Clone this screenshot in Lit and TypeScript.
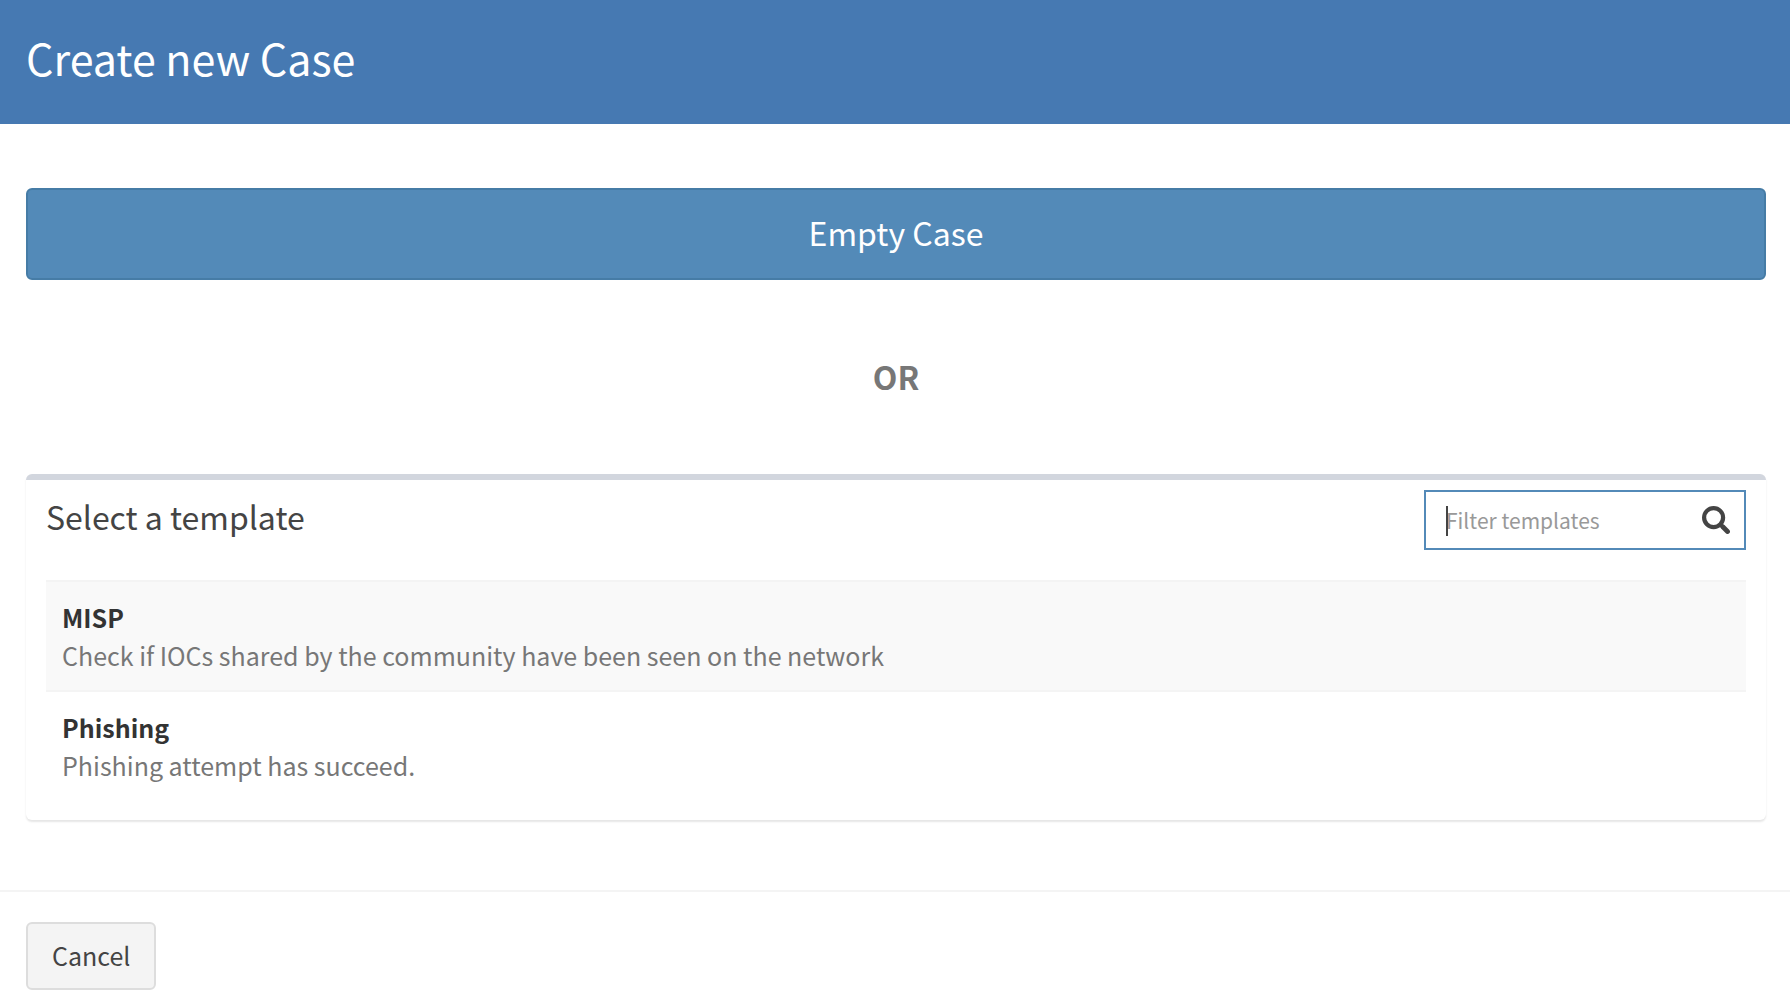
import { LitElement, html, css } from "lit";
import { customElement, state } from "lit/decorators.js";

interface CaseTemplate {
  name: string;
  description: string;
}

const TEMPLATES: CaseTemplate[] = [
  { name: "MISP", description: "Check if IOCs shared by the community have been seen on the network" },
  { name: "Phishing", description: "Phishing attempt has succeed." },
];

@customElement("app-root")
export class AppRoot extends LitElement {
  static styles = css`
    :host {
      display: block;
      min-height: 100vh;
      background: #fff;
      color: #444;
      font-family: "Source Sans Pro", "Noto Sans CJK SC", "Noto Sans", sans-serif;
      font-size: 25px;
      line-height: 38px;
    }
    * {
      box-sizing: border-box;
    }
    button,
    input {
      margin: 0;
      font: inherit;
      color: inherit;
    }
    button {
      cursor: pointer;
    }
    .header {
      padding: 30px 26px 40px;
      background: #4679b2;
      color: #fff;
    }
    .title {
      margin: 0;
      font-size: 43px;
      font-weight: 400;
      line-height: 54px;
    }
    .body {
      padding: 64px 24px 70px 26px;
    }
    .empty {
      display: block;
      width: 100%;
      padding: 18px 24px 22px;
      border: 2px solid #467ca6;
      border-radius: 6px;
      background: #538ab8;
      color: #fff;
      font-size: 32px;
      line-height: 48px;
    }
    .or {
      margin: 0;
      padding: 72px 0 74px;
      color: #777;
      font-size: 32px;
      font-weight: 700;
      line-height: 48px;
      text-align: center;
    }
    .panel {
      padding: 10px 20px 20px;
      border-top: 6px solid #d2d6de;
      border-radius: 6px;
      box-shadow: 0 2px 2px rgba(0, 0, 0, 0.1);
    }
    .panel-head {
      display: flex;
      align-items: flex-start;
      justify-content: space-between;
      margin-bottom: 30px;
    }
    .panel-title {
      margin: 0;
      font-size: 32px;
      font-weight: 400;
      line-height: 52px;
    }
    .filter {
      position: relative;
      display: flex;
      align-items: center;
      gap: 12px;
      width: 322px;
      height: 60px;
      padding: 0 14px 0 20px;
      border: 2px solid #538ab8;
    }
    .filter-input {
      flex: 1;
      min-width: 0;
      padding: 0;
      border: 0;
      outline: 0;
      background: none;
      font-size: 21px;
      line-height: 32px;
    }
    .filter-input::placeholder {
      color: #999;
      opacity: 1;
    }
    .caret {
      position: absolute;
      left: 20px;
      top: 14px;
      width: 2px;
      height: 30px;
      background: #444;
    }
    .icon {
      flex: none;
      width: 28px;
      height: 28px;
      fill: none;
      stroke: #444;
    }
    .list {
      margin: 0;
      padding: 0;
      list-style: none;
    }
    .item {
      border-top: 2px solid #f4f4f4;
    }
    .item:first-child {
      border-bottom: 2px solid #f4f4f4;
    }
    .item:nth-child(2) {
      border-top: 0;
    }
    .item:nth-child(odd) {
      background: #f9f9f9;
    }
    .template {
      display: block;
      width: 100%;
      padding: 16px;
      border: 0;
      background: none;
      text-align: left;
    }
    .name,
    .description {
      display: block;
    }
    .name {
      color: #333;
      font-weight: 700;
    }
    .description {
      color: #777;
    }
    .footer {
      padding: 30px 26px 16px;
      border-top: 2px solid #f4f4f4;
    }
    .cancel {
      display: block;
      padding: 12px 24px 14px;
      border: 2px solid #ddd;
      border-radius: 6px;
      background: #f4f4f4;
    }
  `;

  @state() private query = "";

  private onInput(event: Event) {
    this.query = (event.target as HTMLInputElement).value;
  }

  render() {
    const query = this.query.toLowerCase();
    const visible = TEMPLATES.filter((t) => t.name.toLowerCase().includes(query));
    return html`
      <header class="header"><h1 class="title">Create new Case</h1></header>
      <main class="body">
        <button class="empty" type="button">Empty Case</button>
        <p class="or">OR</p>
        <section class="panel">
          <div class="panel-head">
            <h2 class="panel-title">Select a template</h2>
            <label class="filter">
              <input
                class="filter-input"
                type="text"
                aria-label="Filter templates"
                placeholder="Filter templates"
                .value=${this.query}
                @input=${this.onInput}
              />
              ${this.query ? null : html`<span class="caret"></span>`}
              <svg class="icon" viewBox="0 0 28 28" aria-hidden="true">
                <circle cx="11.6" cy="11.6" r="9.5" stroke-width="4.2" />
                <path d="M18.3 18.3l3 3" stroke-width="3.8" />
                <path d="M20.8 20.8l4.7 4.7" stroke-width="4.8" stroke-linecap="round" />
              </svg>
            </label>
          </div>
          <ul class="list">
            ${visible.map(
              (t) => html`<li class="item">
                <button class="template" type="button">
                  <span class="name">${t.name}</span>
                  <span class="description">${t.description}</span>
                </button>
              </li>`,
            )}
          </ul>
        </section>
      </main>
      <footer class="footer"><button class="cancel" type="button">Cancel</button></footer>
    `;
  }
}
